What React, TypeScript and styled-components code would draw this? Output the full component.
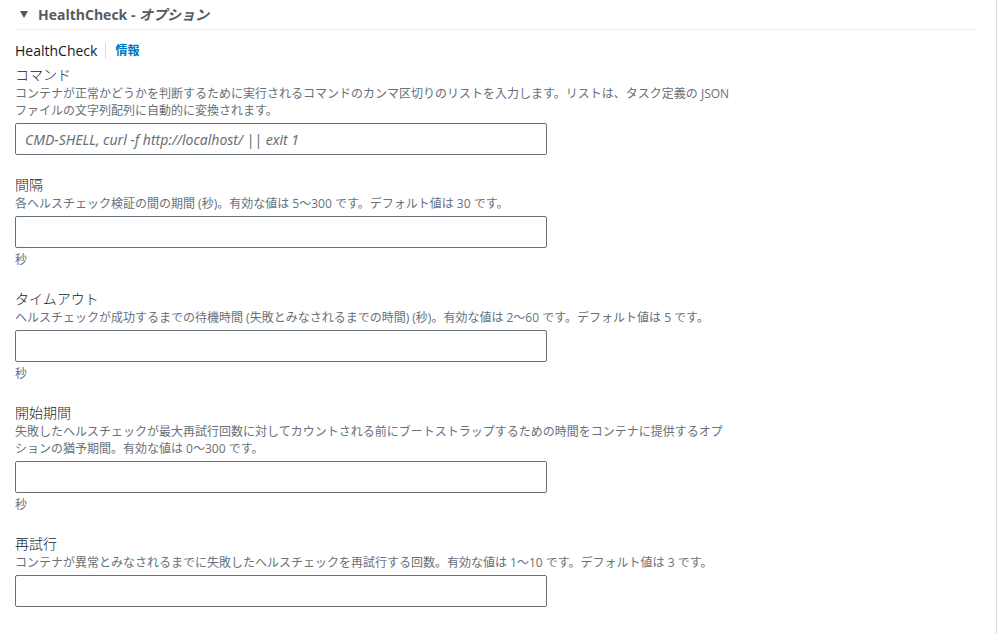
import styled, { createGlobalStyle } from "styled-components";

const GlobalStyle = createGlobalStyle`
    html, body {
        margin: 0;
        padding: 0;
        background: #ffffff;
    }
    body {
        font-family: "Open Sans", "Noto Sans CJK JP", sans-serif;
        color: #16191f;
    }
`;

type Field = {
    label: string;
    desc: string;
    placeholder?: string;
    unit?: string;
};

const fields: Field[] = [
    {
        label: "コマンド",
        desc: "コンテナが正常かどうかを判断するために実行されるコマンドのカンマ区切りのリストを入力します。リストは、タスク定義の JSON ファイルの文字列配列に自動的に変換されます。",
        placeholder: "CMD-SHELL, curl -f http://localhost/ || exit 1",
    },
    {
        label: "間隔",
        desc: "各ヘルスチェック検証の間の期間 (秒)。有効な値は 5〜300 です。デフォルト値は 30 です。",
        unit: "秒",
    },
    {
        label: "タイムアウト",
        desc: "ヘルスチェックが成功するまでの待機時間 (失敗とみなされるまでの時間) (秒)。有効な値は 2〜60 です。デフォルト値は 5 です。",
        unit: "秒",
    },
    {
        label: "開始期間",
        desc: "失敗したヘルスチェックが最大再試行回数に対してカウントされる前にブートストラップするための時間をコンテナに提供するオプションの猶予期間。有効な値は 0〜300 です。",
        unit: "秒",
    },
    {
        label: "再試行",
        desc: "コンテナが異常とみなされるまでに失敗したヘルスチェックを再試行する回数。有効な値は 1〜10 です。デフォルト値は 3 です。",
    },
];

function App() {
    return (
        <>
            <GlobalStyle />
            <Page>
                <Section>
                    <Header>
                        <Caret />
                        <HeaderTitle>
                            HealthCheck - <em>オプション</em>
                        </HeaderTitle>
                    </Header>
                    <Body>
                        <GroupTitle>
                            <span>HealthCheck</span>
                            <InfoLink>情報</InfoLink>
                        </GroupTitle>
                        {fields.map((f, i) => (
                            <FieldBlock key={f.label} first={i === 0}>
                                <Label>{f.label}</Label>
                                <Desc>{f.desc}</Desc>
                                <Input placeholder={f.placeholder} />
                                {f.unit && <Unit>{f.unit}</Unit>}
                            </FieldBlock>
                        ))}
                    </Body>
                </Section>
            </Page>
        </>
    );
}

export default App;

const Page = styled.div`
    width: 997px;
    height: 634px;
    box-sizing: border-box;
    border-right: 1px solid #d5dbdb;
    overflow: hidden;
`;

const Section = styled.div`
    padding: 0 20px 0 15px;
`;

const Header = styled.div`
    display: flex;
    align-items: center;
    height: 30px;
    padding: 0 0 2px 5px;
    border-bottom: 1px solid #eaeded;
    box-sizing: border-box;
`;

const Caret = styled.span`
    width: 0;
    height: 0;
    border-left: 4.5px solid transparent;
    border-right: 4.5px solid transparent;
    border-top: 7px solid #545b64;
    margin: 1px 10px 0 0;
`;

const HeaderTitle = styled.div`
    font-size: 14px;
    font-weight: 700;
    color: #545b64;
    em {
        font-style: italic;
    }
`;

const Body = styled.div`
    padding-top: 11px;
`;

const GroupTitle = styled.div`
    display: flex;
    align-items: center;
    font-size: 14px;
    line-height: 20px;
    color: #16191f;
`;

const InfoLink = styled.span`
    font-size: 12px;
    font-weight: 700;
    color: #0073bb;
    border-left: 1px solid #d5dbdb;
    margin-left: 8px;
    padding-left: 9px;
    line-height: 16px;
`;

const FieldBlock = styled.div<{ first: boolean }>`
    display: flex;
    flex-direction: column;
    margin-top: ${(p) => (p.first ? "4px" : "20px")};
`;

const Label = styled.div`
    font-size: 14px;
    font-weight: 300;
    line-height: 20px;
    color: #16191f;
`;

const Desc = styled.div`
    font-size: 12px;
    line-height: 17px;
    color: #687078;
    max-width: 717px;
    margin-bottom: 4px;
`;

const Input = styled.input`
    width: 532px;
    height: 32px;
    box-sizing: border-box;
    border: 1px solid #687078;
    border-radius: 2px;
    padding: 4px 9px;
    font-family: "Noto Sans", "Noto Sans CJK JP", sans-serif;
    font-size: 14px;
    color: #16191f;
    outline: none;
    &::placeholder {
        font-style: italic;
        color: #687078;
    }
`;

const Unit = styled.div`
    font-size: 12px;
    line-height: 16px;
    color: #687078;
    margin: 4px 0 1px;
`;
